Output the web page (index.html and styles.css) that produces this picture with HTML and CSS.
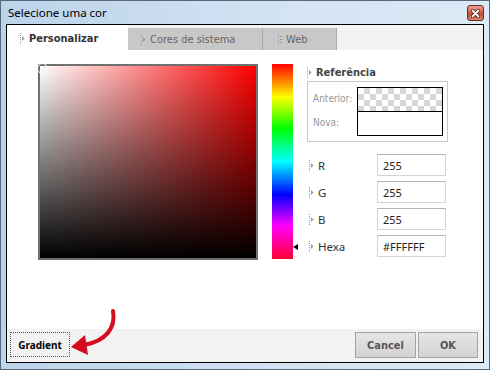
FILE: index.html
```html
<!DOCTYPE html>
<html lang="pt-BR">
<head>
    <meta charset="UTF-8">
    <title>Selecione uma cor</title>
    <link rel="stylesheet" href="styles.css">
</head>
<body>
    <div class="window">
        <div class="titlebar">
            <span class="title">Selecione uma cor</span>
            <button class="close" title="Fechar">
                <svg width="9" height="9" viewBox="0 0 9 9">
                    <path d="M1.5 1.5 L7.5 7.5 M7.5 1.5 L1.5 7.5" stroke="#5a1c12" stroke-width="3.4" stroke-linecap="round"/>
                    <path d="M1.5 1.5 L7.5 7.5 M7.5 1.5 L1.5 7.5" stroke="#ffffff" stroke-width="1.8" stroke-linecap="round"/>
                </svg>
            </button>
        </div>

        <div class="dialog">
            <div class="tabs">
                <div class="tab active">
                    <svg class="grip" width="5" height="11" viewBox="0 0 5 11"><path d="M0 0h1v1H0zM0 2h1v1H0zM0 4h1v1H0zM0 6h1v1H0zM0 8h1v1H0zM0 10h1v1H0z"/><path d="M2 3 L4.5 5.5 L2 8z"/></svg>
                    Personalizar
                </div>
                <div class="tab">
                    <svg class="grip" width="5" height="11" viewBox="0 0 5 11"><path d="M0 0h1v1H0zM0 2h1v1H0zM0 4h1v1H0zM0 6h1v1H0zM0 8h1v1H0zM0 10h1v1H0z"/><path d="M2 3 L4.5 5.5 L2 8z"/></svg>
                    Cores de sistema
                </div>
                <div class="tab web">
                    <svg class="grip" width="5" height="11" viewBox="0 0 5 11"><path d="M0 0h1v1H0zM0 2h1v1H0zM0 4h1v1H0zM0 6h1v1H0zM0 8h1v1H0zM0 10h1v1H0z"/><path d="M2 2h2v1H2zM2 5h3v1H2zM2 8h2v1H2z"/></svg>
                    Web
                </div>
            </div>

            <div class="panel">
                <div class="picker">
                    <span class="marker"></span>
                </div>
                <div class="hue">
                    <span class="hue-arrow"></span>
                </div>

                <div class="side">
                    <div class="heading">
                        <svg class="grip" width="5" height="11" viewBox="0 0 5 11"><path d="M0 0h1v1H0zM0 2h1v1H0zM0 4h1v1H0zM0 6h1v1H0zM0 8h1v1H0zM0 10h1v1H0z"/><path d="M2 3 L4.5 5.5 L2 8z"/></svg>
                        Referência
                    </div>
                    <div class="ref-box">
                        <div class="ref-labels">
                            <span>Anterior:</span>
                            <span>Nova:</span>
                        </div>
                        <div class="swatches">
                            <div class="swatch old"></div>
                            <div class="swatch new"></div>
                        </div>
                    </div>

                    <div class="fields">
                        <div class="field">
                            <label for="r"><svg class="grip" width="5" height="11" viewBox="0 0 5 11"><path d="M0 0h1v1H0zM0 2h1v1H0zM0 4h1v1H0zM0 6h1v1H0zM0 8h1v1H0zM0 10h1v1H0z"/><path d="M2 3 L4.5 5.5 L2 8z"/></svg>R</label>
                            <input type="text" id="r" value="255">
                        </div>
                        <div class="field">
                            <label for="g"><svg class="grip" width="5" height="11" viewBox="0 0 5 11"><path d="M0 0h1v1H0zM0 2h1v1H0zM0 4h1v1H0zM0 6h1v1H0zM0 8h1v1H0zM0 10h1v1H0z"/><path d="M2 3 L4.5 5.5 L2 8z"/></svg>G</label>
                            <input type="text" id="g" value="255">
                        </div>
                        <div class="field">
                            <label for="b"><svg class="grip" width="5" height="11" viewBox="0 0 5 11"><path d="M0 0h1v1H0zM0 2h1v1H0zM0 4h1v1H0zM0 6h1v1H0zM0 8h1v1H0zM0 10h1v1H0z"/><path d="M2 3 L4.5 5.5 L2 8z"/></svg>B</label>
                            <input type="text" id="b" value="255">
                        </div>
                        <div class="field">
                            <label for="hexa"><svg class="grip" width="5" height="11" viewBox="0 0 5 11"><path d="M0 0h1v1H0zM0 2h1v1H0zM0 4h1v1H0zM0 6h1v1H0zM0 8h1v1H0zM0 10h1v1H0z"/><path d="M2 3 L4.5 5.5 L2 8z"/></svg>Hexa</label>
                            <input type="text" id="hexa" value="#FFFFFF">
                        </div>
                    </div>
                </div>
            </div>

            <div class="footer">
                <button class="gradient-btn">Gradient</button>
                <div class="actions">
                    <button class="btn cancel">Cancel</button>
                    <button class="btn ok">OK</button>
                </div>
            </div>
        </div>

        <!-- seta vermelha apontando para o botão Gradient -->
        <svg class="callout" width="490" height="370" viewBox="0 0 490 370">
            <path d="M113 311 C116 328 106 341 84 345" fill="none" stroke="#d40d1e" stroke-width="4" stroke-linecap="round"/>
            <path d="M71 347 L85 335 L88 355 Z" fill="#d40d1e"/>
        </svg>
    </div>
</body>
</html>
```

FILE: styles.css
```css
body {
    margin: 0;
    font-family: "Noto Sans", sans-serif;
    background-color: #ffffff;
}
.window {
    position: relative;
    box-sizing: border-box;
    width: 490px;
    height: 370px;
    display: flex;
    flex-direction: column;
    padding: 0 5px 6px 5px;
    border: 1px solid #56687a;
    background: linear-gradient(to right, #bcd3ea, #d4e4f3 60%, #dce9f6);
}
.titlebar {
    height: 23px;
    display: flex;
    justify-content: space-between;
    align-items: flex-start;
}
.title {
    padding: 4px 0 0 2px;
    font-size: 11.5px;
    color: #000000;
}
.close {
    margin-top: 4px;
    width: 17px;
    height: 16px;
    padding: 0;
    display: flex;
    align-items: center;
    justify-content: center;
    border: 1px solid #6c2a1e;
    border-radius: 3px;
    background: linear-gradient(to bottom, #e8a293, #d2664f 45%, #c04a31 55%, #d9826d);
}
.dialog {
    flex: 1;
    display: flex;
    flex-direction: column;
    border: 1px solid #000000;
    background-color: #ffffff;
}
.tabs {
    height: 25px;
    display: flex;
    align-items: flex-end;
    background-color: #f2f2f2;
    font-family: "DejaVu Sans Condensed", "DejaVu Sans", sans-serif;
    font-size: 11px;
}
.tab {
    box-sizing: border-box;
    height: 22px;
    display: flex;
    align-items: center;
    gap: 4px;
    padding-left: 13px;
    background-color: #c8c8c8;
    border-right: 1px solid #a9a9a9;
    color: #666666;
    width: 135px;
}
.tab.active {
    height: 25px;
    width: 121px;
    background-color: #ffffff;
    border-right: none;
    color: #333333;
    font-weight: bold;
    padding-top: 2px;
}
.tab.web {
    width: 74px;
    padding-left: 15px;
    gap: 3px;
}
.grip {
    fill: #999999;
    flex-shrink: 0;
}
.panel {
    flex: 1;
    display: flex;
    align-items: flex-start;
    padding: 14px 0 0 31px;
}
.picker {
    position: relative;
    box-sizing: border-box;
    width: 220px;
    height: 196px;
    border: 2px solid #707070;
    background:
        linear-gradient(to bottom, rgba(0, 0, 0, 0), #000000),
        linear-gradient(to right, #ffffff, #ff0000);
}
.marker {
    position: absolute;
    left: -3px;
    top: -3px;
    width: 9px;
    height: 9px;
    border: 1px solid #ffffff;
    border-radius: 50%;
}
.hue {
    position: relative;
    margin-left: 14px;
    width: 21px;
    height: 195px;
    background: linear-gradient(to bottom, #ff0000, #ffff00 17%, #00ff00 33%, #00ffff 50%, #0000ff 67%, #ff00ff 83%, #ff0033);
}
.hue-arrow {
    position: absolute;
    left: 21px;
    top: 180px;
    width: 0;
    height: 0;
    border-top: 3px solid transparent;
    border-bottom: 3px solid transparent;
    border-right: 5px solid #000000;
}
.side {
    margin-left: 14px;
    width: 141px;
}
.heading {
    height: 17px;
    display: flex;
    align-items: center;
    gap: 4px;
    font-family: "DejaVu Sans Condensed", "DejaVu Sans", sans-serif;
    font-size: 11px;
    font-weight: bold;
    color: #444444;
}
.ref-box {
    display: flex;
    border: 1px solid #c8c8c8;
    padding: 5px 4px 5px 5px;
}
.ref-labels {
    width: 44px;
    display: flex;
    flex-direction: column;
    font-family: "DejaVu Sans Condensed", "DejaVu Sans", sans-serif;
    font-size: 10px;
    color: #999999;
}
.ref-labels span {
    height: 24px;
    line-height: 24px;
}
.swatches {
    width: 86px;
    box-sizing: border-box;
    border: 1px solid #000000;
}
.swatch {
    height: 23px;
}
.swatch.old {
    border-bottom: 1px solid #000000;
    background-color: #ffffff;
    background-image:
        linear-gradient(45deg, #d6d6d6 25%, transparent 25%, transparent 75%, #d6d6d6 75%),
        linear-gradient(45deg, #d6d6d6 25%, transparent 25%, transparent 75%, #d6d6d6 75%);
    background-size: 12px 12px;
    background-position: 0 0, 6px 6px;
}
.swatch.new {
    background-color: #ffffff;
}
.fields {
    margin-top: 12px;
    display: flex;
    flex-direction: column;
    gap: 5px;
}
.field {
    display: flex;
    align-items: center;
}
.field label {
    width: 68px;
    padding-left: 2px;
    display: flex;
    align-items: center;
    gap: 4px;
    font-size: 11.5px;
    color: #333333;
}
.field input {
    box-sizing: border-box;
    width: 69px;
    height: 22px;
    padding: 0 0 0 5px;
    border: 1px solid #d4d4d4;
    border-top-color: #b4b4b4;
    font-family: "Noto Sans", sans-serif;
    font-size: 11px;
    color: #222222;
}
.footer {
    height: 33px;
    box-sizing: border-box;
    display: flex;
    justify-content: space-between;
    align-items: flex-start;
    padding: 3px 5px 0 3px;
    background-color: #f2f2f2;
}
.gradient-btn {
    box-sizing: border-box;
    width: 60px;
    height: 25px;
    padding: 0;
    border: 1px dotted #555555;
    background: transparent;
    font-family: "Noto Sans", sans-serif;
    font-size: 10px;
    font-weight: bold;
    color: #000000;
}
.actions {
    display: flex;
    gap: 2px;
}
.btn {
    box-sizing: border-box;
    height: 26px;
    padding: 0;
    border: 1px solid #a3a3a3;
    background: linear-gradient(to bottom, #e6e6e6, #d2d2d2);
    font-family: "DejaVu Sans Condensed", "DejaVu Sans", sans-serif;
    font-size: 11px;
    font-weight: bold;
    color: #555555;
}
.btn.cancel {
    width: 61px;
}
.btn.ok {
    width: 60px;
}
.callout {
    position: absolute;
    left: -1px;
    top: -1px;
    pointer-events: none;
}
```
